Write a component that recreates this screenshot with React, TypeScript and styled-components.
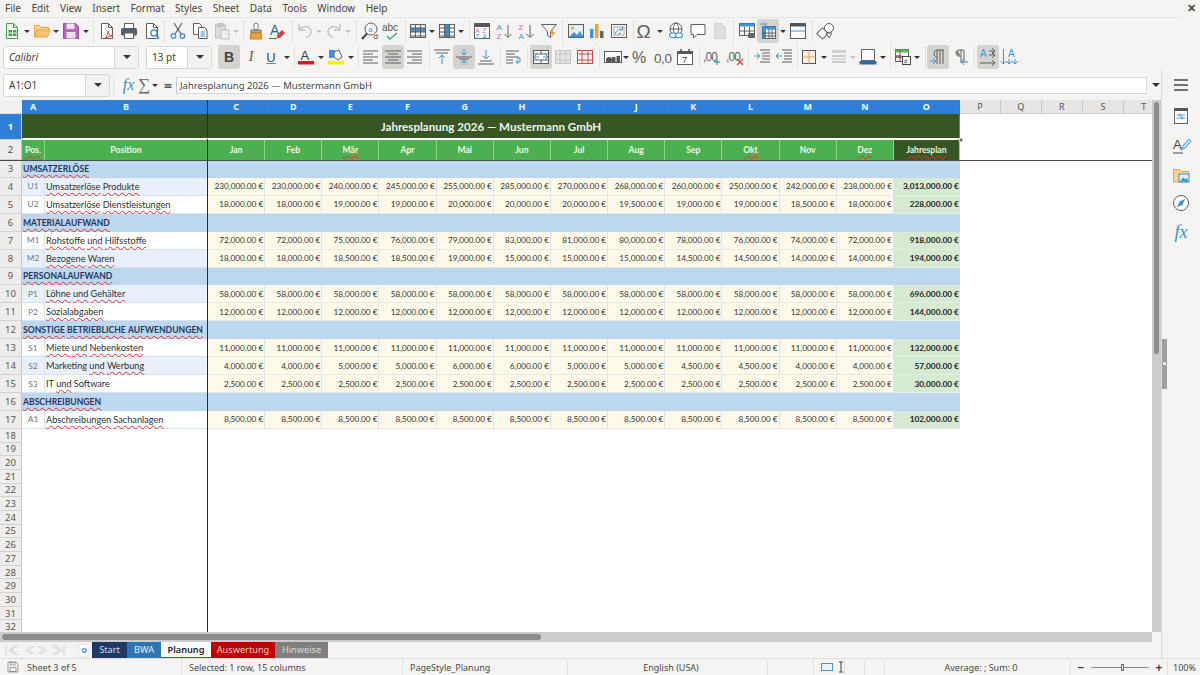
import React from 'react';
import styled, { createGlobalStyle, css } from 'styled-components';

const UI = `"Noto Sans", "Open Sans", "Liberation Sans", sans-serif`;
const CELL = `Lato, "Open Sans", "Liberation Sans", sans-serif`;

const Global = createGlobalStyle`
  html, body { margin: 0; padding: 0; background: #f5f4f2; }
  #root { width: 1200px; height: 675px; overflow: hidden; }
`;

const Page = styled.div`
  width: 1200px; height: 675px; display: flex; flex-direction: column;
  background: #f5f4f2; font-family: ${UI}; color: #3a3a3a; overflow: hidden; position: relative;
`;
const MenuBar = styled.div`
  height: 17px; flex: none; display: flex; align-items: center; padding: 0 0 0 5px; gap: 10.5px;
  font-size: 10px; color: #454545; position: relative; border-bottom: 1px solid #e8e6e3; margin-right: 17px;
`;
const MenuItem = styled.span`line-height: 17px;`;
const CloseX = styled.span`
  position: absolute; right: -13px; top: 1px; font-size: 11px; font-weight: 700; color: #444; line-height: 14px;
`;
const ToolRow = styled.div`height: 26px; flex: none; display: flex; align-items: center;`;
const Slot = styled.div<{ $w: number; $active?: boolean }>`
  flex: none; width: ${p => p.$w}px; height: 24px; display: flex; align-items: center; justify-content: center;
  border-radius: 3px; background: ${p => (p.$active ? '#d5d3d0' : 'transparent')};
`;
const Sep = styled.div`flex: none; width: 1px; height: 22px; background: #e4e2df;`;
const Caret = styled.div<{ $off?: boolean }>`
  width: 0; height: 0; border-left: 3px solid transparent; border-right: 3px solid transparent;
  border-top: 3px solid ${p => (p.$off ? '#c4c4c4' : '#333')};
`;
const Combo = styled.div<{ $w: number; $ml: number }>`
  flex: none; width: ${p => p.$w}px; margin-left: ${p => p.$ml}px; height: 23px; display: flex; box-sizing: border-box;
  border: 1px solid #d8d6d3; border-radius: 3px; background: #fff; overflow: hidden;
`;
const ComboText = styled.div<{ $italic?: boolean }>`
  flex: 1; padding-left: 5px; font-size: 10px; line-height: 21px; color: #3d3d3d; font-style: ${p => (p.$italic ? 'italic' : 'normal')};
`;
const ComboBtn = styled.div`
  flex: none; width: 23px; background: #f3f2f0; border-left: 1px solid #d8d6d3; display: flex; align-items: center; justify-content: center;
  & > div { border-left-width: 4px; border-right-width: 4px; border-top-width: 4px; }
`;
const Body = styled.div`flex: 1; min-height: 0; display: flex;`;
const MainCol = styled.div`width: 1161px; flex: none; display: flex; flex-direction: column;`;
const FormulaBar = styled.div`height: 30px; flex: none; display: flex; align-items: center;`;
const FxLabel = styled.span`
  width: 17px; margin-left: 6px; text-align: center; font-family: "Liberation Serif", serif; font-style: italic; font-size: 16px; color: #3c8ccb;
`;
const SigmaLabel = styled.span`
  width: 14px; text-align: center; font-family: "Liberation Serif", serif; font-size: 17px; color: #666; line-height: 20px;
`;
const EqLabel = styled.span`width: 14px; margin-left: 2px; text-align: center; font-size: 14px; font-weight: 700; color: #555;`;
const FormulaInput = styled.div`
  width: 971px; height: 17px; margin-left: 1px; box-sizing: border-box; background: #fff; border: 1px solid #dcdad7; border-left-color: #ccc;
  padding-left: 3px; font-size: 9.5px; line-height: 15px; color: #444;
`;
const FormulaDrop = styled.div`
  margin-left: 5px; & > div { border-left-width: 4px; border-right-width: 4px; border-top-width: 4px; }
`;
const SheetWrap = styled.div`height: 532px; flex: none; display: flex;`;
const Sheet = styled.div`width: 1152px; flex: none; position: relative; overflow: hidden; background: #fff;`;
const Row = styled.div<{ $h: number }>`display: flex; height: ${p => p.$h}px;`;
const Corner = styled.div`flex: none; width: 22px; background: #f1f0ee; border-bottom: 1px solid #ddd; box-sizing: border-box;`;
const ColHead = styled.div<{ $w: number; $active: boolean }>`
  flex: none; width: ${p => p.$w}px; box-sizing: border-box; text-align: center; font-size: 9px; line-height: 14px;
  ${p => p.$active
    ? css`background: #2f7fd8; color: #f3f8ff; font-weight: 700; border-right: 1px solid #3a78c2;`
    : css`background: #e7e6e4; color: #555; border-right: 1px solid #c9c8c6; border-bottom: 1px solid #d0cfcd;`}
`;
const RowHead = styled.div<{ $active?: boolean }>`
  flex: none; width: 22px; box-sizing: border-box; display: flex; align-items: center; justify-content: center;
  font-size: 9.5px; border-bottom: 1px solid #d3d2d0; border-right: 1px solid #c9c8c6;
  ${p => p.$active ? css`background: #2f7fd8; color: #fff; font-weight: 700;` : css`background: #eeedeb; color: #555;`}
`;
const Title = styled.div`
  flex: none; width: 938px; background: #375623; color: #f1f4ee; font: 700 11.6px ${CELL}; text-align: center; line-height: 25px;
  border-bottom: 1px solid #fff; box-sizing: border-box; height: 26px;
`;
const HeadCell = styled.div<{ $w: number; $dark?: boolean }>`
  flex: none; width: ${p => p.$w}px; box-sizing: border-box; display: flex; align-items: center; justify-content: center;
  font: 700 8.6px ${CELL}; color: #eef7ee; background: ${p => (p.$dark ? '#375623' : '#4caf50')};
  border-right: 1px solid #8ed391;
`;
const Section = styled.div`
  flex: none; width: 938px; background: #bdd7ee; color: #1f3864; font: 700 8.6px ${CELL}; padding-left: 1px; box-sizing: border-box;
  display: flex; align-items: center; gap: 2.2px; white-space: nowrap;
`;
const CodeCell = styled.div<{ $stripe: boolean }>`
  flex: none; width: 23px; box-sizing: border-box; display: flex; align-items: center; justify-content: center;
  font: 8.4px ${CELL}; color: #777; background: ${p => (p.$stripe ? '#e8f1fb' : '#fff')};
  border-right: 1px solid #d6e3f2; border-bottom: 1px solid #d6e3f2;
`;
const NameCell = styled.div<{ $stripe: boolean }>`
  flex: none; width: 163px; box-sizing: border-box; display: flex; align-items: center; gap: 2.2px; padding-left: 1px;
  font: 9.2px ${CELL}; color: #2f2f2f; background: ${p => (p.$stripe ? '#e8f1fb' : '#fff')};
  border-right: 1px solid #d6e3f2; border-bottom: 1px solid #d6e3f2; white-space: nowrap;
`;
const Money = styled.div`
  flex: none; width: 57.17px; box-sizing: border-box; text-align: right; padding-right: 1px; align-self: stretch; display: flex; align-items: center; justify-content: flex-end;
  font: 8.2px ${CELL}; color: #333; background: #fef9e9; border-right: 1px solid #dbe5f0; border-bottom: 1px solid #e6e9e6; white-space: nowrap;
`;
const Total = styled.div`
  flex: none; width: 66px; box-sizing: border-box; display: flex; align-items: center; justify-content: flex-end; padding-right: 1px;
  font: 700 8.3px ${CELL}; color: #1f1f1f; background: #d6e9d3; border-bottom: 1px solid #e3efe1; white-space: nowrap;
`;
const Err = styled.span`text-decoration: underline wavy #e0302c 0.7px; text-underline-offset: 1.5px;`;
const FreezeV = styled.div`position: absolute; left: 207px; top: 0; bottom: 0; width: 1px; background: #2b2b2b;`;
const FreezeH = styled.div`position: absolute; left: 0; right: 0; top: 60px; height: 1px; background: #4a4a4a;`;
const Selection = styled.div`
  position: absolute; left: 22px; top: 14px; width: 938px; height: 25px; box-sizing: border-box; pointer-events: none;
  border: 1px solid #fff; border-right-color: #7a7a7a; border-top-color: transparent; border-left-color: transparent;
`;
const Handle = styled.div`position: absolute; left: 958px; top: 37px; width: 4px; height: 4px; background: #666; border: 1px solid #fff; box-sizing: content-box; transform: scale(.7);`;
const VScroll = styled.div`width: 9px; flex: none; background: #cccccc; padding: 2px 0 0 1.5px; box-sizing: border-box;`;
const VThumb = styled.div`width: 5.5px; height: 252px; border-radius: 3px; background: #8c8c8c;`;
const HScroll = styled.div`height: 10px; width: 1152px; flex: none; background: #cccccc; padding: 2px 0 0 2px; box-sizing: border-box; border-top: 0;`;
const HThumb = styled.div`width: 539px; height: 6px; border-radius: 3px; background: #8c8c8c;`;
const TabBar = styled.div`height: 16px; flex: none; display: flex; align-items: stretch; font-size: 9.2px;`;
const TabNav = styled.div`width: 75px; flex: none; display: flex; align-items: center; padding-left: 5px; box-sizing: border-box;`;
const AddTab = styled.div`width: 17px; flex: none; display: flex; align-items: center; justify-content: center;`;
const Tab = styled.div<{ $w: number; $bg: string; $fg: string; $cur?: boolean }>`
  flex: none; width: ${p => p.$w}px; background: ${p => p.$bg}; color: ${p => p.$fg}; text-align: center; line-height: 15px;
  ${p => p.$cur && css`font-weight: 600; border-bottom: 1px solid #3c6b2a; box-sizing: border-box;`}
`;
const Sidebar = styled.div`
  width: 39px; flex: none; border-left: 1px solid #dcdad7; box-sizing: border-box; position: relative;
  display: flex; flex-direction: column; align-items: center; padding-top: 6px;
`;
const SideBtn = styled.div<{ $mt: number }>`width: 20px; height: 18px; margin-top: ${p => p.$mt}px; display: flex; align-items: center; justify-content: center;`;
const SideFx = styled(FxLabel)`margin: 0; width: 20px; font-size: 18px; line-height: 18px;`;
const Grip = styled.div`position: absolute; left: 0; top: 269px; width: 4.5px; height: 50px; background: #a0a0a0;`;
const GripDot = styled.div`position: absolute; left: 1px; top: 23px; width: 2.5px; height: 3px; border-radius: 2px; background: #fff;`;
const StatusBar = styled.div`
  height: 17px; flex: none; display: flex; align-items: center; border-top: 1px solid #dfddda; box-sizing: border-box; font-size: 9px; color: #4a4a4a; background: #f5f4f2;
`;
const StatusCell = styled.div<{ $w: number; $center?: boolean }>`
  flex: none; width: ${p => p.$w}px; height: 15px; box-sizing: border-box; line-height: 15px; padding-left: 7px; white-space: nowrap;
  border-right: 1px solid #e2e0dd; display: flex; align-items: center; justify-content: ${p => (p.$center ? 'center' : 'flex-start')}; gap: 2px;
`;
const ZoomTrack = styled.div`flex: 1; height: 1px; background: #8a8a8a; position: relative; margin: 0 2px;`;
const ZoomKnob = styled.div`position: absolute; left: 30px; top: -3px; width: 3px; height: 7px; border: 1px solid #666; box-sizing: border-box; background: #f5f4f2;`;
const ZoomSign = styled.span`font-size: 12px; font-weight: 600; color: #333; width: 12px; text-align: center;`;

const Svg = styled.svg`display: block; flex: none; overflow: visible;`;
const GLabel = styled.text`font-family: "Liberation Sans", sans-serif;`;

const GR = '#5f5f5f', BL = '#3d94d6', LG = '#bdbdbd', OR = '#e9a13b', RD = '#d8423e', PK = '#d65fb7';
const L = (x1: number, y1: number, x2: number, y2: number, c = GR, w = 1) => <line x1={x1} y1={y1} x2={x2} y2={y2} stroke={c} strokeWidth={w} />;
const tableGrid = (c = GR) => <>{L(1.5, 6, 16.5, 6, c)}{L(1.5, 10, 16.5, 10, c)}{L(1.5, 14, 16.5, 14, c)}{L(6.5, 2, 6.5, 16, c)}{L(11.5, 2, 11.5, 16, c)}<rect x="1.5" y="2.5" width="15" height="13" fill="none" stroke={c} /></>;
const doc = (c = GR, fill = '#fff') => <path d="M3.5 1.5h7l4 4v11h-11z M10.5 1.5v4h4" stroke={c} fill={fill} />;
const align = (lens: [number, number][], c = GR) => lens.map(([a, b], i) => <React.Fragment key={i}>{L(a, 3 + i * 3, b, 3 + i * 3, c)}</React.Fragment>);
const arrowV = (x: number, y1: number, y2: number) => { const d = y2 > y1 ? -3 : 3; return <>{L(x, y1, x, y2, BL)}<path d={`M${x - 3} ${y2 + d}L${x} ${y2}L${x + 3} ${y2 + d}`} fill="none" stroke={BL} /></>; };
const arrowH = (y: number, x1: number, x2: number, c = BL) => { const d = x2 > x1 ? -3 : 3; return <>{L(x1, y, x2, y, c)}<path d={`M${x2 + d} ${y - 3}L${x2} ${y}L${x2 + d} ${y + 3}`} fill="none" stroke={c} /></>; };

const ICONS: Record<string, React.ReactNode> = {
  new: <>{doc('#46a04a')}<rect x="5.5" y="8" width="8" height="6" fill="#46a04a" />{L(5.5, 11, 13.5, 11, '#fff')}{L(9.5, 8, 9.5, 14, '#fff')}</>,
  open: <><path d="M1.5 15V3.5h5l2 2h7V8" fill="#f8d39a" stroke={OR} /><path d="M1.5 15l2.5-7h13l-2.5 7z" fill="#fbc272" stroke={OR} /></>,
  save: <><path d="M1.5 1.5h12l3 3v12h-15z" fill="#b768bd" stroke="#9a4ea0" /><rect x="4.5" y="1.5" width="8" height="5.5" fill="#f3dff5" /><rect x="4.5" y="10" width="9" height="6.5" fill="#f3dff5" /></>,
  pdf: <>{doc(GR)}<path d="M7 16c2-1 3-5 3-7 0 3 2 5 5 5-3 0-5 1-8 2z" fill="none" stroke={RD} /></>,
  print: <><rect x="4.5" y="1.5" width="9" height="5" fill="#fff" stroke={GR} /><rect x="1" y="6" width="16" height="7.5" rx="1.5" fill="#55606a" /><rect x="4.5" y="11" width="9" height="5.5" fill="#fff" stroke={GR} /></>,
  preview: <>{doc(GR)}<circle cx="11" cy="11" r="3" fill="#fff" stroke={BL} strokeWidth="1.4" />{L(13, 13, 16, 16.5, BL, 1.6)}</>,
  cut: <>{L(5, 1, 12, 12, GR, 1.2)}{L(13, 1, 6, 12, GR, 1.2)}<circle cx="4.5" cy="14" r="2.3" fill="none" stroke={BL} strokeWidth="1.3" /><circle cx="13.5" cy="14" r="2.3" fill="none" stroke={BL} strokeWidth="1.3" /></>,
  copy: <><path d="M2.5 1.5h6l2 2v9h-8z" fill="#fff" stroke={GR} /><path d="M7.5 5.5h6l2.5 2.5v8.500h-8.500z" fill="#fff" stroke={GR} />{L(9.5, 10, 14, 10, BL)}{L(9.5, 12, 14, 12, BL)}{L(9.5, 14, 14, 14, BL)}</>,
  paste: <><rect x="2.500" y="3" width="10" height="13" fill="#dcdcdc" stroke={LG} /><rect x="5" y="1.500" width="5" height="3" fill="#c9c9c9" stroke={LG} /><rect x="8" y="8" width="8" height="9" fill="#f0f0f0" stroke={LG} /></>,
  clone: <><rect x="7" y="1.500" width="4" height="6" rx="1" fill="#fff" stroke="#777" /><path d="M4 8h10v3H4z" fill="#aaa" stroke="#777" /><path d="M4 11h10l1 6H3z" fill={OR} stroke="#c98320" /></>,
  clear: <><GLabel x="2" y="13" fontSize="14" fill="#2b6ca8">A</GLabel><path d="M9 13l5-5 3 3-5 5H9z" fill={RD} />{L(1, 16.500, 9, 16.500, GR)}</>,
  undo: <><path d="M4 7c3-3.500 10-3.500 11 2 .5 3-2 6-5 6" fill="none" stroke={LG} strokeWidth="1.3" /><path d="M3 2v6h6" fill="none" stroke={LG} strokeWidth="1.3" /></>,
  redo: <><path d="M14 7c-3-3.500-10-3.500-11 2-.5 3 2 6 5 6" fill="none" stroke={LG} strokeWidth="1.3" /><path d="M15 2v6H9" fill="none" stroke={LG} strokeWidth="1.3" /></>,
  find: <><circle cx="10" cy="7" r="6" fill="#fff" stroke={GR} />{L(6, 11.500, 1, 17, '#444', 2)}<GLabel x="7.200" y="9.500" fontSize="8" fill={BL}>a</GLabel><GLabel x="12.500" y="17" fontSize="8" fill="#444">d</GLabel></>,
  spell: <><GLabel x="0" y="9" fontSize="10" fill="#555">abc</GLabel><path d="M5 14l3 3 7-6" fill="none" stroke="#4caf7a" strokeWidth="1.6" /></>,
  rows: <><rect x="1.500" y="6" width="15" height="4" fill={BL} />{tableGrid()}</>,
  cols: <><rect x="6.500" y="2.500" width="5" height="13" fill={BL} />{tableGrid()}</>,
  sort: <><rect x="1.500" y="1.500" width="15" height="15" fill="#fff" stroke={GR} /><rect x="1.500" y="1.500" width="15" height="3.500" fill="#555" /><GLabel x="2.200" y="11" fontSize="6.500" fill={PK}>A</GLabel><GLabel x="9.500" y="11" fontSize="6.500" fill={PK}>Z</GLabel><GLabel x="2.200" y="16.500" fontSize="6.500" fill={BL}>Z</GLabel><GLabel x="9.500" y="16.500" fontSize="6.500" fill={BL}>A</GLabel></>,
  asc: <><GLabel x="0.500" y="8" fontSize="8" fill={BL}>A</GLabel><GLabel x="0.500" y="16.500" fontSize="8" fill={PK}>Z</GLabel>{L(12, 3, 12, 15, GR)}<path d="M8.500 12l3.500 3.500 3.500-3.500" fill="none" stroke={GR} /></>,
  desc: <><GLabel x="0.500" y="8" fontSize="8" fill={PK}>Z</GLabel><GLabel x="0.500" y="16.500" fontSize="8" fill={BL}>A</GLabel>{L(12, 3, 12, 15, GR)}<path d="M8.500 12l3.500 3.500 3.500-3.500" fill="none" stroke={GR} /></>,
  filter: <><path d="M1.500 2.500h15l-6 7v6l-3-2v-4z" fill="#fff" stroke={GR} /><path d="M13 7l-3 5h2.500l-1.500 4 4.500-6h-2.500z" fill={OR} /></>,
  image: <><rect x="1.500" y="2.500" width="15" height="13" fill="#e4f1fb" stroke={GR} /><circle cx="5.500" cy="6" r="1.500" fill={OR} /><path d="M2 15l5-5 3 3 3-4 3.500 6z" fill={BL} /></>,
  chart: <><rect x="2" y="7" width="3.500" height="9" fill={BL} /><rect x="7" y="2" width="3.500" height="14" fill={OR} /><rect x="12" y="9" width="3.500" height="7" fill="#666" /></>,
  pivot: <><rect x="1.500" y="2.500" width="15" height="13" fill="#f3f3f3" stroke={GR} /><rect x="4" y="5" width="10" height="8" fill="#fff" stroke="#aaa" /><path d="M5.500 12c0-3 3-5 6-5M11 11l-3 1M12.500 5v3h-3" fill="none" stroke={BL} /></>,
  omega: <GLabel x="0.500" y="16" fontSize="19" fill={GR}>Ω</GLabel>,
  link: <><circle cx="9" cy="7" r="6" fill="#fff" stroke={GR} /><ellipse cx="9" cy="7" rx="2.500" ry="6" fill="none" stroke={GR} />{L(3, 7, 15, 7, GR)}<rect x="2.500" y="11" width="7" height="4.500" rx="2.200" fill="#fff" stroke={BL} strokeWidth="1.2" /><rect x="8.500" y="11" width="7" height="4.500" rx="2.200" fill="#fff" stroke={BL} strokeWidth="1.2" /></>,
  comment: <path d="M2 2.500h14v10H8l-3.500 3.500v-3.500H2z" fill="#fff" stroke={GR} />,
  headers: <path d="M3.500 1.500h7l4 4v11h-11z" fill="#dedede" stroke="#d0d0d0" />,
  freeze: <><rect x="1.500" y="1.500" width="15" height="12" fill="#fff" stroke={GR} /><rect x="1.500" y="1.500" width="15" height="3" fill={BL} />{L(6.500, 5, 6.500, 13, GR)}{L(11.500, 5, 11.500, 13, GR)}{L(1.500, 9, 16.500, 9, GR)}<rect x="10" y="11" width="7" height="5" rx="1" fill="#666" /></>,
  split: <><rect x="3.500" y="4.500" width="13" height="12" fill="#fff" stroke={GR} /><rect x="3.500" y="4.500" width="13" height="3" fill={BL} /><rect x="3.500" y="4.500" width="3.500" height="12" fill={BL} />{L(10, 7, 10, 16, GR)}{L(13, 7, 13, 16, GR)}{L(3, 11, 16, 11, GR)}{L(3, 14, 16, 14, GR)}{L(7, 1, 7, 4, BL)}{L(1, 2, 7, 2, BL)}</>,
  hf: <><rect x="1.500" y="1.500" width="15" height="15" fill="#fff" stroke={GR} /><rect x="1.500" y="1.500" width="15" height="3" fill="#555" />{L(2, 9, 16, 9, BL)}</>,
  shapes: <><rect x="1.500" y="7.500" width="8" height="8" fill="#fff" stroke={GR} transform="rotate(45 5.500 11.500)" /><circle cx="12" cy="6" r="4.500" fill="#fff" stroke={GR} /><path d="M9 11h6l-3 5z" fill="#fff" stroke={GR} /></>,
  fcolor: <><GLabel x="3.500" y="12" fontSize="13" fill="#333">A</GLabel><rect x="1" y="13" width="16" height="3.500" fill="#c9211e" /></>,
  hilite: <><rect x="1" y="13" width="16" height="3.500" fill="#ffee00" /><path d="M2 2h6v5l-2 3H2z" fill={BL} /><path d="M7 4l5-2 3 7-4 3-4-3z" fill="#fff" stroke={GR} /></>,
  left: <>{align([[1, 16], [1, 11], [1, 16], [1, 11], [1, 16]])}</>,
  center: <>{align([[1, 17], [4, 14], [1, 17], [4, 14], [1, 17]])}</>,
  right: <>{align([[1, 16], [6, 16], [1, 16], [6, 16], [1, 16]])}</>,
  vtop: <>{L(1, 2, 17, 2)}{L(3, 5, 15, 5)}{arrowV(9, 16, 7)}</>,
  vmid: <>{L(1, 9, 17, 9)}{L(4, 11, 14, 11)}{arrowV(9, 1, 7)}{arrowV(9, 17, 12)}</>,
  vbot: <>{L(3, 13, 15, 13)}{L(1, 16, 17, 16)}{arrowV(9, 2, 11)}</>,
  wrap: <>{L(1, 3, 14, 3)}{L(1, 6, 10, 6)}{L(1, 9, 14, 9)}{L(1, 12, 8, 12)}{L(1, 15, 8, 15)}<path d="M12 10h3v4h-4M13 12l-2 2 2 2" fill="none" stroke={BL} /></>,
  merge: <><rect x="1.500" y="2.500" width="15" height="13" fill="#fff" stroke={GR} />{L(1.500, 6, 16.500, 6)}{L(1.500, 12, 16.500, 12)}{arrowH(9, 7, 2)}{arrowH(9, 11, 16)}{L(9, 6, 9, 2)}{L(9, 12, 9, 16)}</>,
  mergeoff: <><rect x="1.500" y="2.500" width="15" height="13" fill="#e6e6e6" stroke="#c4c4c4" />{L(1.500, 6, 16.500, 6, '#c4c4c4')}{L(1.500, 12, 16.500, 12, '#c4c4c4')}{L(6, 2, 6, 16, '#c4c4c4')}{L(12, 2, 12, 16, '#c4c4c4')}</>,
  unmerge: <><rect x="1.500" y="2.500" width="15" height="13" fill="#fff" stroke={RD} />{L(1.500, 6, 16.500, 6, RD)}{L(1.500, 12, 16.500, 12, RD)}{L(6, 2, 6, 16, RD)}{L(12, 2, 12, 16, RD)}</>,
  currency: <><rect x="0.500" y="3.500" width="17" height="11" fill="#fff" stroke={GR} /><circle cx="5" cy="12" r="3" fill="#555" /><rect x="8" y="9" width="3.500" height="6" fill="#555" /><rect x="12.500" y="8" width="3.500" height="7" fill="#555" /></>,
  percent: <GLabel x="0" y="15" fontSize="16" fill={GR}>%</GLabel>,
  number: <GLabel x="0" y="15" fontSize="13.500" fill={GR} textLength="18">0,0</GLabel>,
  date: <><rect x="1.500" y="3.500" width="15" height="13" fill="#fff" stroke={GR} /><rect x="1.500" y="3.500" width="15" height="2.500" fill="#555" />{L(5, 1, 5, 4, '#555', 1.5)}{L(13, 1, 13, 4, '#555', 1.5)}<GLabel x="6" y="15" fontSize="9.500" fill="#444">7</GLabel></>,
  adddec: <><GLabel x="0" y="13" fontSize="12" fill={GR} textLength="15">,00</GLabel>{L(14, 11, 14, 17, BL, 1.300)}{L(11, 14, 17, 14, BL, 1.300)}</>,
  deldec: <><GLabel x="0" y="13" fontSize="12" fill={GR} textLength="15">,00</GLabel>{L(11, 11, 17, 17, RD, 1.300)}{L(17, 11, 11, 17, RD, 1.300)}</>,
  indent: <>{L(7, 2, 17, 2)}{L(9, 5, 17, 5)}{L(9, 8, 17, 8)}{L(9, 11, 17, 11)}{L(7, 14, 17, 14)}{arrowH(8, 1, 7)}</>,
  outdent: <>{L(7, 2, 17, 2)}{L(9, 5, 17, 5)}{L(9, 8, 17, 8)}{L(9, 11, 17, 11)}{L(7, 14, 17, 14)}{arrowH(8, 7, 1)}</>,
  borders: <><rect x="2.500" y="2.500" width="13" height="13" fill="none" stroke="#555" />{L(9, 2.500, 9, 15.500, OR)}{L(2.500, 9, 15.500, 9, OR)}</>,
  bstyle: <><rect x="2" y="2" width="14" height="3" fill="#d0d0d0" />{L(2, 8, 16, 8, '#bbb', 1.500)}{L(2, 11, 16, 11, '#bbb')}{L(2, 14, 16, 14, '#bbb', 1.500)}</>,
  bcolor: <><rect x="2.500" y="1.500" width="13" height="11" fill="#fff" stroke="#666" /><rect x="0.500" y="13" width="17" height="3.500" fill="#2a6fb3" /></>,
  cond: <><rect x="1.500" y="1.500" width="13" height="12" fill="#fff" stroke={GR} /><rect x="1.500" y="1.500" width="13" height="3" fill="#5cb85c" /><rect x="1.500" y="7" width="6" height="3" fill={RD} opacity=".7" />{L(6, 2, 6, 13, GR)}{L(2, 9, 14, 9, GR)}<rect x="8.500" y="8.500" width="8" height="8" fill="#fff" stroke="#444" /><GLabel x="10" y="15.500" fontSize="7" fill="#444">≠</GLabel></>,
  ltr: <><path d="M8 16V2h7M8 2C4 2 4 9 8 9M11 2v14M14 2v14" fill="none" stroke={GR} />{arrowH(13, 1, 7)}</>,
  rtl: <><path d="M7 2h6v13M10 2v13" fill="none" stroke={GR} /><path d="M7 2c-4 0-4 7 3 7z" fill="#888" />{arrowH(14, 17, 10)}</>,
  horiz: <><GLabel x="1" y="9" fontSize="10" fill={BL}>A</GLabel>{arrowH(3, 10, 16, GR)}{arrowH(7, 10, 16, GR)}{arrowH(15, 1, 16, GR)}</>,
  vert: <><GLabel x="7" y="9" fontSize="10" fill={BL}>A</GLabel>{arrowV(2.500, 1, 16)}{arrowV(8, 11, 16)}{arrowV(14, 11, 16)}</>,
  burger: <>{L(2, 4, 16, 4, '#444', 1.500)}{L(2, 9, 16, 9, '#444', 1.500)}{L(2, 14, 16, 14, '#444', 1.500)}</>,
  props: <><rect x="2.500" y="1.500" width="13" height="15" fill="#fff" stroke={GR} /><rect x="2.500" y="1.500" width="13" height="2.500" fill="#555" />{L(5, 8, 13, 8, BL)}{L(5, 11, 13, 11, BL)}{L(8, 6.500, 8, 9.500, BL)}{L(10, 9.500, 10, 12.500, BL)}</>,
  styles: <><GLabel x="1" y="12" fontSize="13" fill="#444">A</GLabel><path d="M17 2l-6 7-2 4 4-2 6-7z" fill="#cfe4f5" stroke={BL} />{L(1, 16, 11, 16, '#444')}</>,
  gallery: <><path d="M1.500 16V3.500h6l2 2h7V16z" fill="#fbd199" stroke={OR} /><rect x="7" y="8" width="10" height="8" fill="#e3f0fa" stroke={BL} /><path d="M8 15.500l3-4 2 2 1.500-1.500 2 3.500z" fill={BL} /></>,
  nav: <><circle cx="9" cy="9" r="7.500" fill="#fff" stroke={GR} /><path d="M13 5l-2.500 6L5 13l2.500-5.500z" fill={BL} /></>,
  saveS: <><path d="M1.500 1.500h12l3 3v12h-15z" fill="none" stroke="#777" /><rect x="5" y="2" width="7" height="4" fill="none" stroke="#777" /><rect x="4.500" y="10" width="9" height="6" fill="none" stroke="#777" /></>,
  addtab: <><path d="M3.500 1.500h7l4 4v11h-11z" fill="#fff" stroke="#ddd" /><circle cx="10" cy="9" r="3" fill={BL} />{L(10, 7, 10, 11, '#fff')}{L(8, 9, 12, 9, '#fff')}</>,
  nav1: <><path d="M2 2v14M14 2L6 9l8 7" fill="none" stroke="#d5d5d5" strokeWidth="1.300" /></>,
};

const Icon = ({ n, size = 18 }: { n: string; size?: number }) => (
  <Svg width={size} height={size} viewBox="0 0 18 18" fill="none">{ICONS[n]}</Svg>
);

type Item = [number, string, boolean?];
const widthOf = (it: Item) => (it[1] === '|' ? 1 : it[1] === 'v' || it[1] === 'x' ? 8 : it[2] ? 22 : 18);

const Tools = ({ items, start }: { items: Item[]; start: number }) => {
  let cursor = start;
  return (
    <>
      {items.map((it, i) => {
        const w = widthOf(it);
        const ml = it[0] - w / 2 - cursor;
        cursor = it[0] + w / 2;
        const style = { marginLeft: ml };
        if (it[1] === '|') return <Sep key={i} style={style} />;
        if (it[1] === 'v' || it[1] === 'x') return <Slot key={i} $w={w} style={style}><Caret $off={it[1] === 'x'} /></Slot>;
        return <Slot key={i} $w={w} $active={it[2]} style={style}>{TXT[it[1]] ?? <Icon n={it[1]} />}</Slot>;
      })}
    </>
  );
};

const BoldB = styled.span`font: 700 14px "Liberation Sans", sans-serif; color: #444;`;
const ItalicI = styled.span`font: italic 14px "Liberation Serif", serif; color: #555;`;
const UnderU = styled.span`font: 13px "Liberation Sans", sans-serif; color: #444; text-decoration: underline; text-decoration-color: #3d94d6;`;
const TXT: Record<string, React.ReactNode> = { B: <BoldB>B</BoldB>, I: <ItalicI>I</ItalicI>, U: <UnderU>U</UnderU> };

const TOP: Item[] = [
  [12, 'new'], [27, 'v'], [42, 'open'], [56, 'v'], [71, 'save'], [86, 'v'], [93, '|'], [107, 'pdf'], [129, 'print'], [152, 'preview'], [164, '|'],
  [178, 'cut'], [200, 'copy'], [222, 'paste'], [236, 'x'], [243, '|'], [256, 'clone'], [277, 'clear'], [292, '|'], [305, 'undo'], [319, 'x'], [334, 'redo'], [348, 'x'], [356, '|'],
  [370, 'find'], [391, 'spell'], [405, '|'], [418, 'rows'], [432, 'v'], [447, 'cols'], [461, 'v'], [469, '|'], [482, 'sort'], [505, 'asc'], [527, 'desc'], [549, 'filter'], [562, '|'],
  [576, 'image'], [597, 'chart'], [619, 'pivot'], [633, '|'], [645, 'omega'], [660, 'v'], [676, 'link'], [698, 'comment'], [720, 'headers'], [733, '|'],
  [747, 'freeze'], [768, 'split', true], [783, 'v'], [798, 'hf'], [812, '|'], [826, 'shapes'],
];
const FMT: Item[] = [
  [229, 'B', true], [251, 'I'], [271, 'U'], [287, 'v'], [294, '|'], [306, 'fcolor'], [321, 'v'], [336, 'hilite'], [351, 'v'], [358, '|'],
  [371, 'left'], [393, 'center', true], [415, 'right'], [429, '|'], [442, 'vtop'], [464, 'vmid', true], [486, 'vbot'], [500, '|'], [514, 'wrap'], [527, '|'],
  [541, 'merge', true], [563, 'mergeoff'], [585, 'unmerge'], [599, '|'], [613, 'currency'], [626, 'v'], [641, 'percent'], [663, 'number'], [685, 'date'], [699, '|'],
  [712, 'adddec'], [735, 'deldec'], [748, '|'], [762, 'indent'], [784, 'outdent'], [797, '|'], [809, 'borders'], [824, 'v'], [839, 'bstyle'], [853, 'x'], [868, 'bcolor'], [883, 'v'], [890, '|'],
  [903, 'cond'], [917, 'v'], [925, '|'], [938, 'ltr', true], [960, 'rtl'], [974, '|'], [988, 'horiz', true], [1010, 'vert'],
];

const MENUS = ['File', 'Edit', 'View', 'Insert', 'Format', 'Styles', 'Sheet', 'Data', 'Tools', 'Window', 'Help'];
const COLS: [string, number, boolean][] = [
  ['A', 23, true], ['B', 163, true],
  ...['C', 'D', 'E', 'F', 'G', 'H', 'I', 'J', 'K', 'L', 'M', 'N'].map((c): [string, number, boolean] => [c, 57.17, true]),
  ['O', 66, true], ['P', 41, false], ['Q', 41, false], ['R', 41, false], ['S', 41, false], ['T', 41, false],
];
const MONTHS: [string, boolean][] = [['Jan', false], ['Feb', false], ['Mär', true], ['Apr', false], ['Mai', false], ['Jun', false], ['Jul', false], ['Aug', false], ['Sep', false], ['Okt', true], ['Nov', false], ['Dez', true]];

type Line = { kind: 's'; label: string[] } | { kind: 'd'; code: string; name: [string, boolean][]; stripe: boolean; values: number[]; total: number };
const rep = (n: number): number[] => Array(12).fill(n);
const W = (...w: string[]): [string, boolean][] => w.map(x => [x, true]);
const DATA: Line[] = [
  { kind: 's', label: ['UMSATZERLÖSE'] },
  { kind: 'd', code: 'U1', name: W('Umsatzerlöse', 'Produkte'), stripe: true, values: [230000, 230000, 240000, 245000, 255000, 285000, 270000, 268000, 260000, 250000, 242000, 238000], total: 3013000 },
  { kind: 'd', code: 'U2', name: W('Umsatzerlöse', 'Dienstleistungen'), stripe: false, values: [18000, 18000, 19000, 19000, 20000, 20000, 20000, 19500, 19000, 19000, 18500, 18000], total: 228000 },
  { kind: 's', label: ['MATERIALAUFWAND'] },
  { kind: 'd', code: 'M1', name: [['Rohstoffe', true], ['und', true], ['Hilfsstoffe', true]], stripe: false, values: [72000, 72000, 75000, 76000, 79000, 83000, 81000, 80000, 78000, 76000, 74000, 72000], total: 918000 },
  { kind: 'd', code: 'M2', name: W('Bezogene', 'Waren'), stripe: true, values: [18000, 18000, 18500, 18500, 19000, 15000, 15000, 15000, 14500, 14500, 14000, 14000], total: 194000 },
  { kind: 's', label: ['PERSONALAUFWAND'] },
  { kind: 'd', code: 'P1', name: W('Löhne', 'und', 'Gehälter'), stripe: true, values: rep(58000), total: 696000 },
  { kind: 'd', code: 'P2', name: W('Sozialabgaben'), stripe: false, values: rep(12000), total: 144000 },
  { kind: 's', label: ['SONSTIGE', 'BETRIEBLICHE', 'AUFWENDUNGEN'] },
  { kind: 'd', code: 'S1', name: W('Miete', 'und', 'Nebenkosten'), stripe: false, values: rep(11000), total: 132000 },
  { kind: 'd', code: 'S2', name: [['Marketing', false], ['und', true], ['Werbung', true]], stripe: true, values: [4000, 4000, 5000, 5000, 6000, 6000, 5000, 5000, 4500, 4500, 4000, 4000], total: 57000 },
  { kind: 'd', code: 'S3', name: [['IT', false], ['und', true], ['Software', false]], stripe: false, values: rep(2500), total: 30000 },
  { kind: 's', label: ['ABSCHREIBUNGEN'] },
  { kind: 'd', code: 'A1', name: W('Abschreibungen', 'Sachanlagen'), stripe: false, values: rep(8500), total: 102000 },
];
const eur = (n: number) => n.toLocaleString('en-US', { minimumFractionDigits: 2, maximumFractionDigits: 2 }) + ' €';
const ROW_H = 17.93;

export default function App() {
  return (
    <Page>
      <Global />
      <MenuBar>
        {MENUS.map(m => <MenuItem key={m}>{m}</MenuItem>)}
        <CloseX>✕</CloseX>
      </MenuBar>
      <ToolRow><Tools items={TOP} start={0} /></ToolRow>
      <ToolRow>
        <Combo $w={136} $ml={3}><ComboText $italic>Calibri</ComboText><ComboBtn><Caret /></ComboBtn></Combo>
        <Combo $w={66} $ml={7}><ComboText>13 pt</ComboText><ComboBtn><Caret /></ComboBtn></Combo>
        <Tools items={FMT} start={212} />
      </ToolRow>
      <Body>
        <MainCol>
          <FormulaBar>
            <Combo $w={107} $ml={3}><ComboText>A1:O1</ComboText><ComboBtn><Caret /></ComboBtn></Combo>
            <Sep style={{ marginLeft: 3 }} />
            <FxLabel>fx</FxLabel>
            <SigmaLabel>∑</SigmaLabel>
            <Slot $w={8} style={{ height: 'auto' }}><Caret /></Slot>
            <EqLabel>=</EqLabel>
            <FormulaInput>Jahresplanung 2026 — Mustermann GmbH</FormulaInput>
            <FormulaDrop><Caret /></FormulaDrop>
          </FormulaBar>
          <SheetWrap>
            <Sheet>
              <Row $h={14}>
                <Corner />
                {COLS.map(([c, w, a]) => <ColHead key={c} $w={w} $active={a}>{c}</ColHead>)}
              </Row>
              <Row $h={26}>
                <RowHead $active>1</RowHead>
                <Title>Jahresplanung 2026 — Mustermann GmbH</Title>
              </Row>
              <Row $h={20}>
                <RowHead>2</RowHead>
                <HeadCell $w={23}><Err>Pos.</Err></HeadCell>
                <HeadCell $w={163}>Position</HeadCell>
                {MONTHS.map(([m, e]) => <HeadCell key={m} $w={57.17}>{e ? <Err>{m}</Err> : m}</HeadCell>)}
                <HeadCell $w={66} $dark><Err>Jahresplan</Err></HeadCell>
              </Row>
              {DATA.map((line, i) => (
                <Row key={i} $h={ROW_H}>
                  <RowHead>{i + 3}</RowHead>
                  {line.kind === 's' ? (
                    <Section>{line.label.map(w => <Err key={w}>{w}</Err>)}</Section>
                  ) : (
                    <>
                      <CodeCell $stripe={line.stripe}>{line.code}</CodeCell>
                      <NameCell $stripe={line.stripe}>
                        {line.name.map(([w, e]) => (e ? <Err key={w}>{w}</Err> : <span key={w}>{w}</span>))}
                      </NameCell>
                      {line.values.map((v, j) => <Money key={j}>{eur(v)}</Money>)}
                      <Total>{eur(line.total)}</Total>
                    </>
                  )}
                </Row>
              ))}
              {Array.from({ length: 15 }, (_, i) => (
                <Row key={i} $h={13.7}><RowHead>{i + 18}</RowHead></Row>
              ))}
              <FreezeV />
              <FreezeH />
              <Selection />
              <Handle />
            </Sheet>
            <VScroll><VThumb /></VScroll>
          </SheetWrap>
          <HScroll><HThumb /></HScroll>
          <TabBar>
            <TabNav><Svg width="60" height="12" viewBox="0 0 60 12" fill="none"><path d="M1 1v10M11 1L4 6l7 5M13 1L6 6l7 5M26 2l-5 4 5 4M29 2l-5 4 5 4M33 2l5 4-5 4M36 2l5 4-5 4M47 1l7 5-7 5M50 1l7 5-7 5M59 1v10" stroke="#d2d2d2" /></Svg></TabNav>
            <AddTab><Icon n="addtab" size={15} /></AddTab>
            <Tab $w={35} $bg="#1f3864" $fg="#d6deeb">Start</Tab>
            <Tab $w={34} $bg="#2e75b6" $fg="#e2eef9">BWA</Tab>
            <Tab $w={50} $bg="#ffffff" $fg="#222" $cur>Planung</Tab>
            <Tab $w={64} $bg="#c00000" $fg="#f6c9c9">Auswertung</Tab>
            <Tab $w={53} $bg="#7f7f7f" $fg="#dcdcdc">Hinweise</Tab>
          </TabBar>
        </MainCol>
        <Sidebar>
          <SideBtn $mt={0}><Icon n="burger" /></SideBtn>
          <SideBtn $mt={13}><Icon n="props" /></SideBtn>
          <SideBtn $mt={12}><Icon n="styles" /></SideBtn>
          <SideBtn $mt={11}><Icon n="gallery" /></SideBtn>
          <SideBtn $mt={10}><Icon n="nav" /></SideBtn>
          <SideBtn $mt={11}><SideFx>fx</SideFx></SideBtn>
          <Grip><GripDot /></Grip>
        </Sidebar>
      </Body>
      <StatusBar>
        <StatusCell $w={182}><Icon n="saveS" size={12} /><span style={{ marginLeft: 6 }}>Sheet 3 of 5</span></StatusCell>
        <StatusCell $w={221}>Selected: 1 row, 15 columns</StatusCell>
        <StatusCell $w={165}>PageStyle_Planung</StatusCell>
        <StatusCell $w={200} $center>English (USA)</StatusCell>
        <StatusCell $w={46} />
        <StatusCell $w={31} $center>
          <Svg width="24" height="12" viewBox="0 0 24 12" fill="none"><rect x="0.500" y="2.500" width="11" height="7" stroke="#3d94d6" fill="#e8f3fb" /><path d="M18 1h4M20 1v10M18 11h4" stroke="#444" /></Svg>
        </StatusCell>
        <StatusCell $w={20} />
        <StatusCell $w={20} />
        <StatusCell $w={186} $center>Average: ; Sum: 0</StatusCell>
        <StatusCell $w={97} style={{ padding: '0 2px 0 4px' }}>
          <ZoomSign>−</ZoomSign>
          <ZoomTrack><ZoomKnob /></ZoomTrack>
          <ZoomSign>+</ZoomSign>
        </StatusCell>
        <StatusCell $w={32} style={{ border: 0, paddingLeft: 5 }}>100%</StatusCell>
      </StatusBar>
    </Page>
  );
}
